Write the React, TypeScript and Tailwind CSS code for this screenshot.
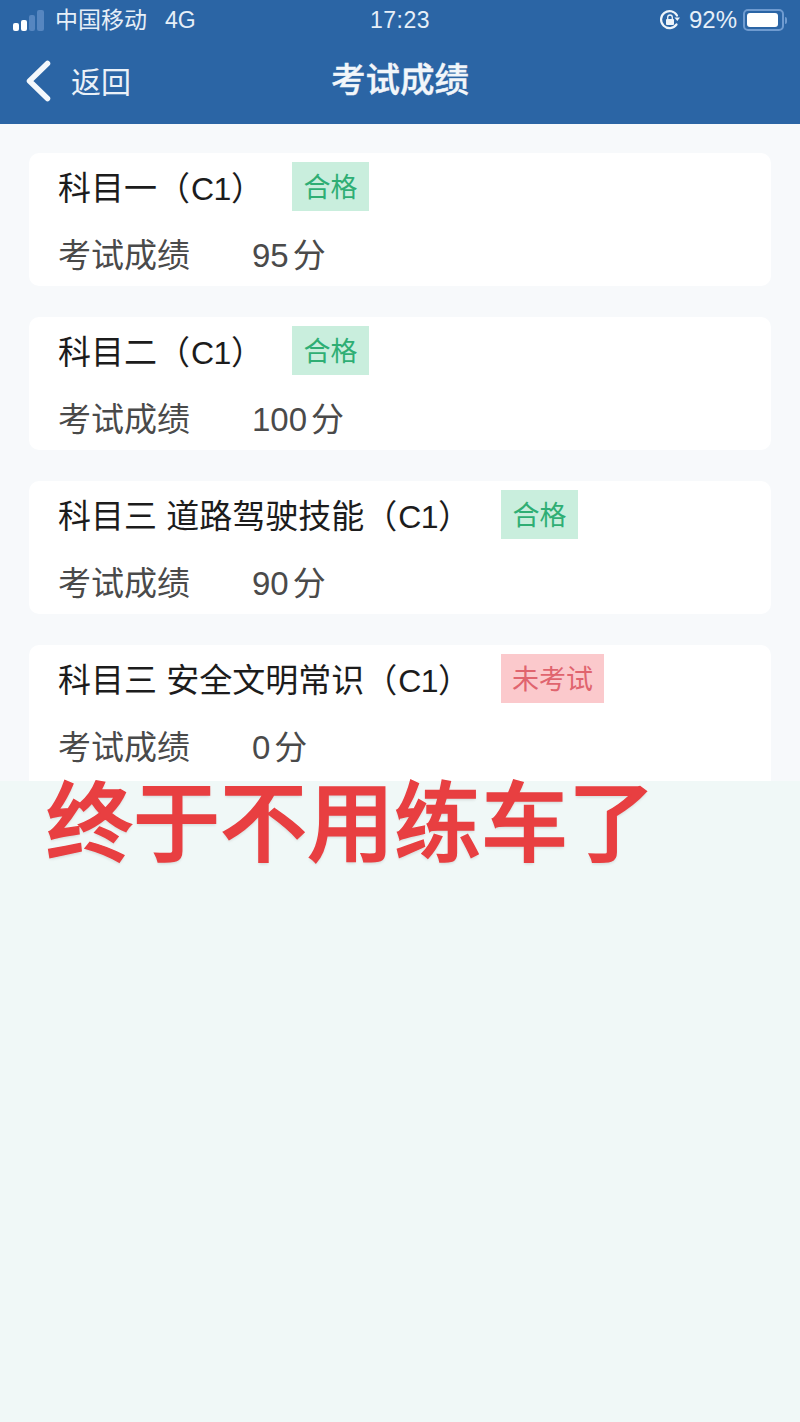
const cjk = "font-['Liberation_Sans','Noto_Sans_CJK_SC',sans-serif]";

const scoreItems = [
  { title: "科目一", score: "95", status: "合格", titleW: "w-[234px]" },
  { title: "科目二", score: "100", status: "合格", titleW: "w-[234px]" },
  { title: "科目三 道路驾驶技能", score: "90", status: "合格", titleW: "w-[443px]" },
  { title: "科目三 安全文明常识", score: "0", status: "未考试", titleW: "w-[443px]" },
];

const StatusBar = () => (
  <div className="h-10 grid grid-cols-[1fr_auto_1fr] items-center pl-[13px] pr-[13px] text-[23px] text-[#e6eff8]">
    <div className="flex items-center">
      <div className="flex items-end gap-[2px] h-[21px] w-[33px]">
        <span className="w-[6px] h-[8px] rounded-[2px] bg-white"></span>
        <span className="w-[6px] h-[11px] rounded-[2px] bg-white"></span>
        <span className="w-[6px] h-[16px] rounded-[2px] bg-[#5686c0]"></span>
        <span className="w-[7px] h-[21px] rounded-[2px] bg-[#5686c0]"></span>
      </div>
      <span className="ml-[9px]">中国移动</span>
      <span className="ml-[18px]">4G</span>
    </div>
    <div className="text-center tracking-[0.5px]">17:23</div>
    <div className="flex items-center justify-end">
      <svg width="22" height="22" viewBox="0 0 22 22" fill="none" className="mr-[8px]">
        <path d="M17.5 15.5A8.5 8.5 0 1 1 18 6.5" stroke="#eef4fa" strokeWidth="2.2" strokeLinecap="round" />
        <path d="M15.5 8.5h5.5l-2.7 3.4z" fill="#eef4fa" />
        <rect x="7" y="10" width="8" height="6" rx="1" fill="#eef4fa" />
        <path d="M8.7 10V8.3a2.3 2.3 0 0 1 4.6 0V10" stroke="#eef4fa" strokeWidth="1.3" />
      </svg>
      <span className="text-[24px]">92%</span>
      <div className="ml-[6px] flex items-center">
        <div className="w-[41px] h-[22px] rounded-[5px] border-2 border-[#6f9bd0] p-[2px]">
          <div className="h-full w-[95%] rounded-[3px] bg-white"></div>
        </div>
        <span className="ml-[1px] w-[2px] h-[7px] rounded-r-sm bg-[#6f9bd0]"></span>
      </div>
    </div>
  </div>
);

const NavBar = () => (
  <div className="h-[84px] grid grid-cols-[1fr_auto_1fr] items-center pb-[2px]">
    <div className="flex items-center pl-[25px]">
      <svg width="26" height="42" viewBox="0 0 26 42" fill="none">
        <path d="M22.5 3.5 4.5 21l18 17.5" stroke="#f4f8fc" strokeWidth="5.5" strokeLinecap="round" strokeLinejoin="round" />
      </svg>
      <span className="ml-[20px] text-[30px] text-[#eaf1f8] mt-[3px]">返回</span>
    </div>
    <div className="text-[34.5px] font-medium text-[#f2f6fa] [-webkit-text-stroke:0.4px_#f2f6fa]">考试成绩</div>
    <div></div>
  </div>
);

const ScoreCard = ({ item, last }: { item: (typeof scoreItems)[number]; last: boolean }) => {
  const failed = item.status === "未考试";
  return (
    <div
      className={`mx-[29px] bg-white pt-[9px] pl-[29px] ${
        last ? "h-[136px] rounded-t-[10px]" : "h-[133px] rounded-[10px]"
      }`}
    >
      <div className="flex items-center h-[49px]">
        <div className={`${item.titleW} pt-[4px] text-[33px] text-[#1c1c1c] whitespace-nowrap`}>
          {item.title}（<span className="ml-[1px] tracking-[-0.5px] text-[32px]">C1</span>）
        </div>
        <span
          className={`h-[49px] flex items-center pt-[3px] text-[27px] ${
            failed ? "px-[11px] bg-[#fbc9cc] text-[#e0646e]" : "px-[11.5px] bg-[#c9eedd] text-[#2fae74]"
          }`}
        >
          {item.status}
        </span>
      </div>
      <div className="flex items-center h-[33px] mt-[28px] text-[33px] text-[#4a4a4a]">
        <span className="w-[194px] whitespace-nowrap">考试成绩</span>
        <span className="whitespace-nowrap">{item.score}</span>
        <span className="ml-[4px]">分</span>
      </div>
    </div>
  );
};

const App = () => {
  return (
    <div className={`${cjk} w-[800px] h-[1422px] overflow-hidden bg-[#f0f8f7]`}>
      <div className="bg-[#2b65a5]">
        <StatusBar />
        <NavBar />
      </div>
      <div className="h-[657px] pt-[29px] bg-[#f7f9fb] flex flex-col gap-[31px]">
        {scoreItems.map((item, i) => (
          <ScoreCard item={item} last={i === scoreItems.length - 1} key={i} />
        ))}
      </div>
      <div className="pl-[46px] text-[87px] leading-[88px] font-medium text-[#e83f41] whitespace-nowrap [-webkit-text-stroke:1.5px_#e83f41] [text-shadow:0_2px_3px_rgba(0,0,0,0.12)]">
        终于不用练车了
      </div>
    </div>
  );
};

export default App;
